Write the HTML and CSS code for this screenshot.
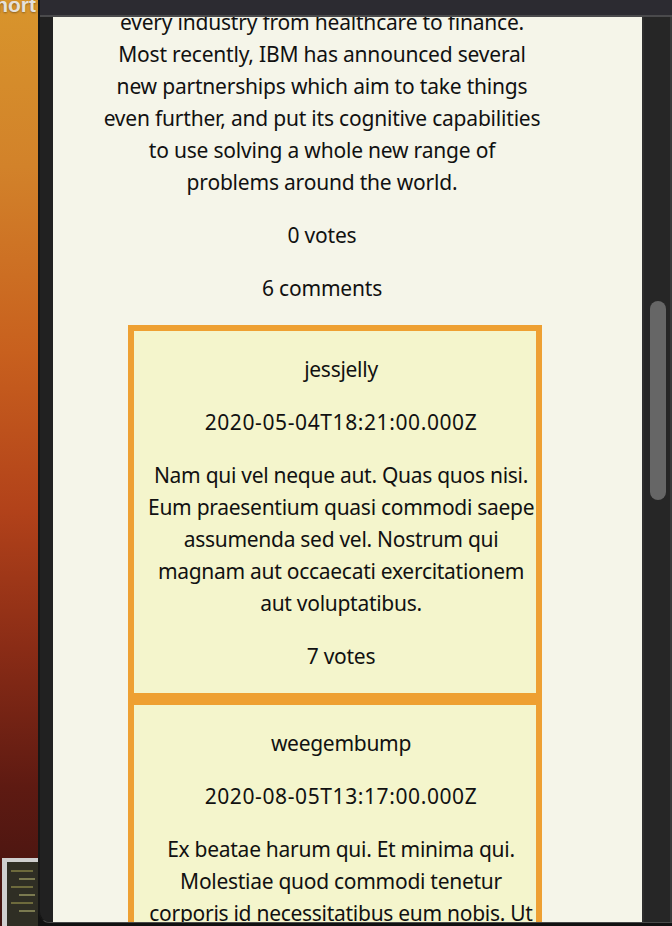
FILE: index.html
```html
<!DOCTYPE html>
<html lang="en">
<head>
<meta charset="utf-8">
<title>Article</title>
<link rel="stylesheet" href="styles.css">
</head>
<body>
<div class="desktop">
  <aside class="desk-left">
    <span class="desk-label">Short</span>
    <div class="desk-thumb"><div class="thumb-inner"><i></i><i></i><i></i><i></i><i></i><i></i></div></div>
  </aside>
  <div class="window">
    <div class="titlebar"></div>
    <div class="viewport">
      <div class="gutter"></div>
      <main class="page">
        <article class="article">
          <p class="body">every industry from healthcare to finance.<br>Most recently, IBM has announced several<br>new partnerships which aim to take things<br>even further, and put its cognitive capabilities<br>to use solving a whole new range of<br>problems around the world.</p>
          <p>0 votes</p>
          <p>6 comments</p>
          <ul class="comments">
            <li class="comment">
              <p>jessjelly</p>
              <p class="date">2020-05-04T18:21:00.000Z</p>
              <p>Nam qui vel neque aut. Quas quos nisi.<br>Eum praesentium quasi commodi saepe<br>assumenda sed vel. Nostrum qui<br>magnam aut occaecati exercitationem<br>aut voluptatibus.</p>
              <p>7 votes</p>
            </li>
            <li class="comment">
              <p>weegembump</p>
              <p class="date">2020-08-05T13:17:00.000Z</p>
              <p>Ex beatae harum qui. Et minima qui.<br>Molestiae quod commodi tenetur<br>corporis id necessitatibus eum nobis. Ut<br>sit et sint.</p>
              <p>3 votes</p>
            </li>
          </ul>
        </article>
      </main>
      <div class="scrollbar"><div class="scroll-thumb"></div></div>
    </div>
  </div>
</div>
</body>
</html>
```
FILE: styles.css
```css
* { box-sizing: border-box; }
html, body { margin: 0; padding: 0; }
body {
  width: 672px;
  height: 926px;
  overflow: hidden;
  background: #111;
}
.desktop {
  display: flex;
  height: 926px;
}
.desk-left {
  position: relative;
  width: 38px;
  flex: none;
  background: linear-gradient(180deg, #d8952c 0%, #d2822a 18%, #c8601e 38%, #b2421a 55%, #8a2c16 70%, #5e1a12 85%, #401310 100%);
  overflow: hidden;
}
.desk-label {
  position: absolute;
  right: 2px;
  top: -7px;
  font-family: "Liberation Sans", Arial, sans-serif;
  font-weight: bold;
  font-size: 21px;
  color: #e6e1da;
  text-shadow: 0 1px 2px rgba(0,0,0,0.35);
  white-space: nowrap;
}
.desk-thumb {
  position: absolute;
  left: 2px;
  top: 858px;
  width: 44px;
  height: 70px;
  background: #cfcfcf;
  padding: 4px 0 0 5px;
}
.thumb-inner {
  height: 100%;
  background: #2f2e24;
  display: flex;
  flex-direction: column;
  gap: 6px;
  padding: 8px 4px;
}
.thumb-inner i {
  display: block;
  height: 2px;
  width: 70%;
  background: #6d6a3c;
}
.thumb-inner i:nth-child(2n) { width: 50%; margin-left: 8px; background: #7b7a50; }
.window {
  flex: 1;
  height: 923px;
  display: flex;
  flex-direction: column;
  border-left: 2px solid #161616;
  border-bottom: 1px solid #4a4a4a;
  border-bottom-left-radius: 12px;
  overflow: hidden;
  background: #212121;
}
.titlebar {
  height: 17px;
  flex: none;
  background: #2c2b31;
  border-bottom: 2px solid #4a4a4c;
}
.viewport {
  flex: 1;
  display: flex;
  min-height: 0;
}
.gutter {
  width: 13px;
  flex: none;
  background: #212121;
}
.page {
  width: 589px;
  flex: none;
  background: #f5f5e9;
  overflow: hidden;
  padding-left: 49px;
  font-family: "Noto Sans", "Open Sans", sans-serif;
  font-size: 21px;
  letter-spacing: -0.2px;
  line-height: 32px;
  color: #111;
}
.article {
  width: 440px;
  text-align: center;
}
.article p {
  margin: 21px 0;
  white-space: nowrap;
}
.article .body { margin-top: -11px; }
.comments {
  list-style: none;
  margin: 21px 0 0 26px;
  padding: 0;
}
.comment {
  background: #f4f5cc;
  border: 6px solid #eea032;
  padding: 1px 2px 0 14px;
  letter-spacing: -0.28px;
  display: flow-root;
}
.comment .date { letter-spacing: 0.6px; }
.scrollbar {
  width: 30px;
  flex: none;
  background: #262626;
  border-left: 2px solid #2d2d2d;
  border-right: 2px solid #3a3a3a;
  padding: 284px 2px 0 6px;
}
.scroll-thumb {
  width: 16px;
  height: 199px;
  border-radius: 8px;
  background: #666;
}
```
